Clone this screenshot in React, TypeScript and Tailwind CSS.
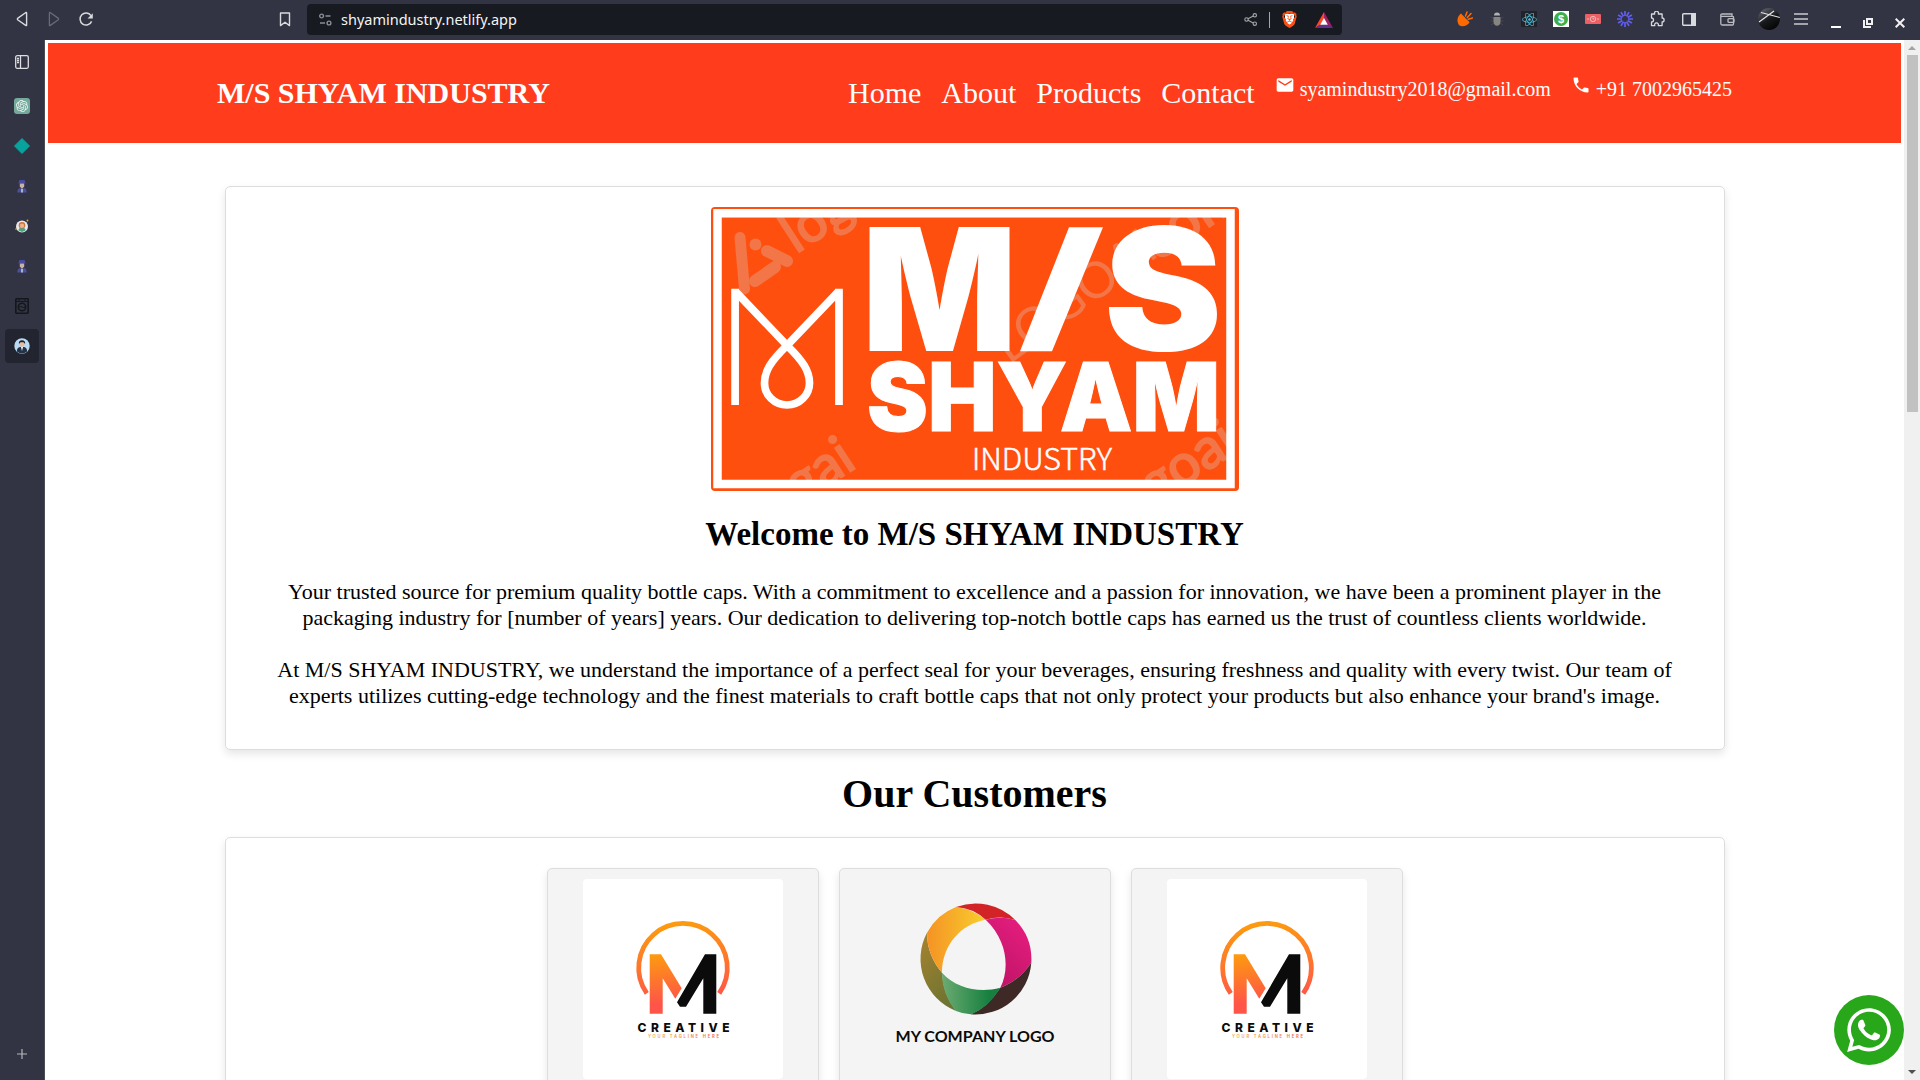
import React from "react";
import { SiBrave, SiOpenai } from "react-icons/si";
import { FaReact, FaWhatsapp } from "react-icons/fa";
import { MdEmail, MdPhone } from "react-icons/md";

type Kids = { children?: React.ReactNode };

const Cell = ({ children }: Kids) => (
  <div className="flex h-10 w-8 shrink-0 items-center justify-center pb-0.5">{children}</div>
);

function Toolbar() {
  return (
    <div className="flex h-10 shrink-0 items-center bg-[#323443] text-[#d9dadd]">
      <div className="flex w-[301px] items-center pl-[6px]">
        <Cell>
          <svg width="16" height="16" viewBox="0 0 16 16" fill="none" stroke="currentColor" strokeWidth="1.4" strokeLinejoin="round">
            <path d="M12.6 2v12.2Q12.6 15 11.7 14.4L3.6 8.7Q3 8 3.6 7.4L11.5 1.7Q12.6 1 12.6 2z" />
          </svg>
        </Cell>
        <Cell>
          <svg width="16" height="16" viewBox="0 0 16 16" fill="none" stroke="#686a77" strokeWidth="1.3" strokeLinejoin="round">
            <path d="M3.4 2v12.2Q3.4 15 4.3 14.4L12.4 8.7Q13 8 12.4 7.4L4.5 1.7Q3.4 1 3.4 2z" />
          </svg>
        </Cell>
        <Cell>
          <svg width="16" height="16" viewBox="0 0 16 16" fill="none" stroke="currentColor" strokeWidth="1.5">
            <path d="M13 4.6A6 6 0 1 0 13.6 10.4" />
            <path d="M14.8 2.2v5.2H9.6z" fill="currentColor" stroke="none" />
          </svg>
        </Cell>
        <div className="flex-1" />
        <div className="mb-0.5 flex w-8 justify-center">
          <svg width="12" height="15" viewBox="0 0 12 15" fill="none" stroke="currentColor" strokeWidth="1.4" strokeLinejoin="round">
            <path d="M1.5 1h9v12.6L6 10.2 1.5 13.6z" />
          </svg>
        </div>
      </div>
      <div className="mb-px ml-[6px] flex h-[31px] w-[1035px] items-center rounded bg-[#181a21] pl-3">
        <svg width="13" height="13" viewBox="0 0 13 13" fill="none" stroke="#8b8d94" strokeWidth="1.4">
          <circle cx="2.6" cy="3" r="1.9" />
          <path d="M6.5 3h5M1 10h5" />
          <circle cx="10" cy="10" r="1.9" />
        </svg>
        <span className="mb-0.5 ml-[9px] font-['Noto_Sans'] text-[14.5px] leading-5 text-[#f4f4f5]">shyamindustry.netlify.app</span>
        <div className="flex-1" />
        <svg className="mr-[11px]" width="14" height="13" viewBox="0 0 14 13" fill="none" stroke="#a5a6ab" strokeWidth="1.1">
          <circle cx="2.5" cy="6.5" r="1.7" />
          <circle cx="10.8" cy="2.3" r="1.7" />
          <circle cx="10.8" cy="10.7" r="1.7" />
          <path d="M4 5.7 9.2 3.1M4 7.3l5.2 2.6" />
        </svg>
        <div className="mr-[11px] h-4 w-px bg-[#a5a6ab]" />
        <div className="relative mr-[17px] flex h-[19px] w-[17px] items-center justify-center">
          <div className="absolute left-1 top-1 h-[11px] w-[9px] bg-white" />
          <SiBrave className="relative" size={19} color="#fb4f14" />
        </div>
        <svg className="mr-[9px]" width="18" height="16" viewBox="0 0 18 16">
          <path d="M9 0 0 16l9-5.500z" fill="#ff4724" />
          <path d="M9 0l9 16-9-5.500z" fill="#9e1f63" />
          <path d="M0 16h18l-5-3.500H5z" fill="#662d91" />
          <path d="M9 6l3.800 6.700H5.200z" fill="#fff" />
        </svg>
      </div>
      <div className="ml-[107px] flex items-center">
        <Cell>
          <svg width="16" height="16" viewBox="0 0 16 16">
            <path d="M3.400 3.300C-.5 6 0 12 2.200 14.200 5 16.500 10.500 15 12 11.800z" fill="#ff6a00" />
            <path d="M3.300 3.200 12 11.900" stroke="#ff6a00" strokeWidth="1.800" />
            <path d="M8.500 5 10 1M10.300 6.500l3.700-4M11.300 8.300l4.200-1.300" stroke="#ff6a00" strokeWidth="1.500" strokeLinecap="round" />
          </svg>
        </Cell>
        <Cell>
          <svg width="14" height="16" viewBox="0 0 14 16">
            <path d="M.5 6l4 2M.500 10h4M1 14l3-2M13.500 6l-4 2M13.500 10h-4M13 14l-3-2" stroke="#46474f" />
            <path d="M4 4.500Q4 1.500 7 1.500t3 3z" fill="#b1b1b1" />
            <path d="M3.500 6h7v5Q10 14.800 7 14.800T3.500 11z" fill="#85867f" />
          </svg>
        </Cell>
        <Cell>
          <div className="flex size-4 items-center justify-center bg-[#20232a]">
            <FaReact size={15} color="#53c1de" />
          </div>
        </Cell>
        <Cell>
          <div className="flex size-4 items-center justify-center bg-white">
            <div className="flex size-[14px] items-center justify-center rounded-full bg-[#3fae49] font-['Liberation_Sans'] text-[11px] font-bold leading-none text-white">$</div>
          </div>
        </Cell>
        <Cell>
          <svg width="16" height="10" viewBox="0 0 16 10">
            <rect width="16" height="10" rx="1" fill="#ea6065" />
            <g fill="none" stroke="#f6bcbd" strokeWidth=".9">
              <circle cx="8" cy="5" r="2.700" />
              <path d="M8 3.500V5h1.300M3 4v2M13 4v2" />
            </g>
          </svg>
        </Cell>
        <Cell>
          <svg width="16" height="16" viewBox="0 0 16 16" stroke="#625df5" strokeWidth="1.700">
            <path d="M8 0v5M8 11v5M0 8h5M11 8h5M4 1.100l2.500 4.300M9.500 10.600 12 14.900M1.100 4l4.300 2.500M10.600 9.500l4.300 2.500M1.100 12l4.300-2.500M10.600 6.500 14.900 4M4 14.900l2.500-4.300M9.500 5.400 12 1.100" />
          </svg>
        </Cell>
        <Cell>
          <svg width="15" height="16" viewBox="0 0 15 16" fill="none" stroke="currentColor" strokeWidth="1.300" strokeLinejoin="round">
            <path d="M1.500 3h3.200a2 2 0 1 1 3.600 0h3.800v4a2 2 0 1 1 0 4v3.600H8.200a1.900 1.900 0 1 0-3.400 0H1.500V11a2 2 0 1 0 0-4z" />
          </svg>
        </Cell>
        <Cell>
          <svg width="14" height="13" viewBox="0 0 14 13">
            <rect x=".7" y=".7" width="12.600" height="11.600" rx="1" fill="none" stroke="currentColor" strokeWidth="1.400" />
            <path d="M9 0h5v13H9z" fill="currentColor" />
          </svg>
        </Cell>
        <div className="ml-[15px] mt-px flex w-8 items-center pb-0.5">
          <svg width="15" height="13" viewBox="0 0 15 13" fill="none" stroke="#babbc1" strokeWidth="1.300">
            <path d="M12 3V1H2Q.8 1 .8 2v8.500Q.8 12 2 12h10.500Q13.500 12 13.500 11V4Q13.500 3.300 12.500 3.300H1" />
            <rect x="8" y="5.600" width="6" height="3.800" rx="1" />
          </svg>
        </div>
        <div className="ml-[6px] flex w-[22px] pb-0.5">
          <svg width="22" height="22" viewBox="0 0 22 22">
            <defs>
              <linearGradient id="ball" x1="0" y1="0" x2=".6" y2="1">
                <stop offset="0" stopColor="#70737a" />
                <stop offset=".6" stopColor="#17191c" />
                <stop offset="1" stopColor="#050607" />
              </linearGradient>
              <clipPath id="ballc"><circle cx="11" cy="11" r="11" /></clipPath>
            </defs>
            <circle cx="11" cy="11" r="11" fill="url(#ball)" />
            <g clipPath="url(#ballc)" stroke="#e3e4e6" strokeWidth="1.200">
              <path d="M3 4.500 22 9.500M1 14 16 3" />
            </g>
          </svg>
        </div>
        <div className="ml-[14px] flex w-[14px] pb-0.5">
          <svg width="14" height="12" viewBox="0 0 14 12" stroke="#c9cacf" strokeWidth="1.300">
            <path d="M0 1h14M0 6h14M0 11h14" />
          </svg>
        </div>
        <div className="ml-[23px] mt-3.5 h-0.5 w-2.5 bg-white" />
        <svg className="ml-[22px] mt-[6px]" width="10" height="10" viewBox="0 0 10 10" fill="none" stroke="#f1f1f3" strokeWidth="2">
          <path d="M4 1h5v5H4z" />
          <path d="M1 2v7h7" />
        </svg>
        <svg className="ml-[22px] mt-[6px]" width="10" height="10" viewBox="0 0 10 10" stroke="#f1f1f3" strokeWidth="2">
          <path d="M.7.700l8.600 8.600M9.300.700.700 9.300" />
        </svg>
      </div>
    </div>
  );
}

const Detective = () => (
  <svg width="12" height="13" viewBox="0 0 12 13">
    <path d="M3.300 0h5.400l.5 2.500 1.500.8H1.300l1.500-.8z" fill="#4b4c9d" />
    <path d="M3.800 3.500h4.400v3L6 9 3.800 6.500z" fill="#c3b3a9" />
    <path d="M1.300 12.500q0-4 2.700-4.500l2 1.500L8 8q2.700.5 2.700 4.500z" fill="#4a50a0" />
    <path d="M5 9h2v3.500H5z" fill="#aeb0c6" />
  </svg>
);

function Sidebar() {
  const icons = [
    <div className="flex size-4 items-center justify-center rounded-[3px] bg-[#75a99b]"><SiOpenai size={12} color="#f0f8f5" /></div>,
    <svg width="16" height="16" viewBox="0 0 16 16"><path d="M8 .5 15.500 8 8 15.500.500 8z" fill="#08a39d" stroke="#08a39d" strokeLinejoin="round" /></svg>,
    <Detective />,
    <svg width="14" height="14" viewBox="0 0 14 14">
      <circle cx="7" cy="7.500" r="6" fill="#e9e9ee" />
      <path d="M3.500 11.500q0-3 3.500-3t3.500 3L7 13.100z" fill="#4aa583" />
      <circle cx="7" cy="6.300" r="3.300" fill="#c9733f" />
      <circle cx="7" cy="6.700" r="2.200" fill="#f0b287" />
      <circle cx="12.500" cy="1.500" r=".9" fill="#e8b028" />
      <circle cx="1" cy="10" r=".8" fill="#e8b028" />
    </svg>,
    <Detective />,
    <svg width="14" height="16" viewBox="0 0 14 16" fill="none" stroke="#15171d">
      <rect x=".8" y=".8" width="12.400" height="14.400" rx=".6" strokeWidth="1.600" />
      <path d="M1 3.500h12M3 2h2M9 2h2" />
      <circle cx="7" cy="9" r="3.700" strokeWidth="1.600" />
      <path d="M4 9q1.500-1 3 0t3 0" />
    </svg>,
    <div className="flex h-[34px] w-[34px] items-center justify-center rounded bg-[#22242f]">
      <svg width="16" height="16" viewBox="0 0 16 16">
        <circle cx="8" cy="8" r="7.700" fill="#b9dcf4" />
        <path d="M2.800 13.500q.2-4.500 3.700-4.500h3q3.500 0 3.700 4.500Q8 17.500 2.800 13.500z" fill="#243347" />
        <circle cx="8" cy="6" r="2.700" fill="#e7bd9d" />
        <path d="M4.900 6Q4.500 2.300 8 2.300T11.100 6L9.500 4.300h-3z" fill="#1a2230" />
        <path d="M7 9h2l-1 4z" fill="#fff" />
      </svg>
    </div>,
  ];
  return (
    <div className="flex w-[45px] shrink-0 flex-col items-center border-r border-[#4a4c59] bg-[#323443] pr-px">
      <div className="flex h-[46px] items-center pb-0.5">
        <svg width="14" height="14" viewBox="0 0 14 14" fill="none" stroke="#dcdde0" strokeWidth="1.300">
          <rect x=".7" y=".7" width="12.600" height="12.600" rx="1.500" />
          <path d="M5.500 1v12M2 3.500h2M2 5.500h2M2 7.500h2" />
        </svg>
      </div>
      {icons.map((icon, i) => (
        <div key={i} className="flex h-10 items-center justify-center">{icon}</div>
      ))}
      <div className="flex-1" />
      <svg className="mb-[21px]" width="10" height="10" viewBox="0 0 10 10" stroke="#b4b5bb" strokeWidth="1.200"><path d="M5 0v10M0 5h10" /></svg>
    </div>
  );
}

const ShyamLogo = () => (
  <svg width="528" height="284" viewBox="0 0 528 284">
    <defs><clipPath id="frame"><rect x="6" y="6" width="514" height="271" /></clipPath></defs>
    <rect width="528" height="284" rx="4" fill="#ff4f0f" />
    <g clipPath="url(#frame)" fill="#f27648" fontFamily="Lato, sans-serif" fontWeight="400">
      <g stroke="#f27648" strokeLinecap="round" fill="none">
        <path d="M29 30.500 33.500 82" strokeWidth="11" />
        <path d="M56 44l20 10" strokeWidth="12" />
        <path d="M44 74l20-14" strokeWidth="12" />
      </g>
      <circle cx="44.500" cy="37.500" r="6" />
      <text transform="translate(85 47) rotate(-33)" fontSize="54" stroke="#f27648" strokeWidth="2">logo</text>
      <text transform="translate(298 158) rotate(-36)" fontSize="50">LOGOAI</text>
      <circle cx="435" cy="58" r="3.500" />
      <text transform="translate(446 55) rotate(-34)" fontSize="57" stroke="#f27648" strokeWidth="2">com</text>
      <text transform="translate(63 314) rotate(-33)" fontSize="55" stroke="#f27648" strokeWidth="2">ogai</text>
      <text transform="translate(444 298) rotate(-33)" fontSize="56" stroke="#f27648" strokeWidth="2">goai</text>
    </g>
    <rect x="6.500" y="6.300" width="513" height="270.700" fill="none" stroke="#fff" strokeWidth="8.500" />
    <g fill="none" stroke="#fff" strokeWidth="7.700">
      <path d="M24.100 198V81.700M128 198V81.700" />
      <path d="M24.500 84.500 76 138.500C92 154 98.500 164 98.500 176a22.500 22 0 0 1-45 0C53.500 164 60 154 76 138.500L127.500 84.500" />
    </g>
    <g fill="#fff" fontFamily="Inter, sans-serif" fontWeight="900">
      <text x="151" y="144.300" fontSize="170.500" textLength="155" lengthAdjust="spacingAndGlyphs">M</text>
      <path d="M358 20.300h34L341 144.300h-32z" />
      <text x="393" y="144.300" fontSize="170.500" textLength="118" lengthAdjust="spacingAndGlyphs">S</text>
      <text x="156" y="223.700" fontSize="95" stroke="#fff" strokeWidth="1" textLength="353" lengthAdjust="spacingAndGlyphs">SHYAM</text>
    </g>
    <text x="261" y="263.300" fill="#fff" stroke="#fff" strokeWidth=".5" fontFamily="'Noto Sans CJK SC', sans-serif" fontSize="30" fontWeight="300" textLength="140" lengthAdjust="spacingAndGlyphs">INDUSTRY</text>
  </svg>
);

const CreativeLogo = ({ id }: { id: string }) => (
  <svg className="rounded-[4px] bg-white" width="200" height="200" viewBox="0 0 200 200">
    <defs>
      <linearGradient id={id} gradientUnits="userSpaceOnUse" x1="90" y1="45" x2="98" y2="122">
        <stop offset="0" stopColor="#fd9a10" />
        <stop offset="1" stopColor="#ff5548" />
      </linearGradient>
      <linearGradient id={id + "m"} gradientUnits="userSpaceOnUse" x1="74" y1="76" x2="80" y2="124">
        <stop offset="0" stopColor="#fd9a10" />
        <stop offset="1" stopColor="#ff5548" />
      </linearGradient>
      <linearGradient id={id + "t"}>
        <stop offset="0" stopColor="#f0b040" />
        <stop offset="1" stopColor="#f06050" />
      </linearGradient>
    </defs>
    <path d="M63.800 114.300A44.300 44.300 0 1 1 136.200 114.300" fill="none" stroke={`url(#${id})`} strokeWidth="4.800" />
    <path d="M66.700 75.300H78L98.700 109.300 92.300 119.700 79.700 99.300V134.700h-13z" fill={`url(#${id}m)`} />
    <path d="M122 75.300h11.300v59.400h-13V99.300L103 127.700h-6L94 123.300z" fill="#0b0b0b" />
    <text x="54.500" y="153" fontFamily="Inter, sans-serif" fontWeight="800" fontSize="12" textLength="92" lengthAdjust="spacing" fill="#0b0b0b">CREATIVE</text>
    <text x="65" y="158.500" fontFamily="Inter, sans-serif" fontWeight="600" fontSize="4.200" textLength="71" fill={`url(#${id}t)`}>YOUR TAGLINE HERE</text>
  </svg>
);

const CompanyLogo = () => (
  <svg width="200" height="200" viewBox="0 0 200 200">
    <defs>
      <linearGradient id="yl"><stop offset="0" stopColor="#f59324" /><stop offset="1" stopColor="#f8ce2e" /></linearGradient>
      <linearGradient id="mg" x1="1" y1="0" x2=".4" y2="1"><stop offset="0" stopColor="#ea1f80" /><stop offset="1" stopColor="#c01468" /></linearGradient>
      <linearGradient id="gr"><stop offset="0" stopColor="#6cab72" /><stop offset=".8" stopColor="#178040" /></linearGradient>
      <linearGradient id="ol" x1="0" y1="0" x2=".5" y2="1"><stop offset="0" stopColor="#a8832f" /><stop offset="1" stopColor="#6f7432" /></linearGradient>
    </defs>
    <path d="M81 132A56 56 0 0 1 52 53.700Q52 76 67 93.700 68 115 81 132z" fill="url(#ol)" />
    <path d="M52 53.700A56 56 0 0 1 81 28Q98 30 110.700 40.700C86 45 67 66 67 93.700Q52 76 52 53.700z" fill="url(#yl)" />
    <path d="M81 28A56 56 0 0 1 140.300 41Q126 36 110.700 40.700 98 29 81 28z" fill="#d22327" />
    <path d="M110.700 40.700Q126 36.500 140.300 41A56 56 0 0 1 156.300 83.700Q144 102 125.300 108.700C134 92 134 63 110.700 40.700z" fill="url(#mg)" />
    <path d="M156.300 83.700A56 56 0 0 1 95.700 135.300Q112 129 125.300 108.700 144 102 156.300 83.700z" fill="#3f2927" />
    <path d="M95.700 135.300Q88 135 81 132 67 115 67 93.700C82 110 105 114 125.300 108.700Q113 129 95.700 135.300z" fill="url(#gr)" />
    <text x="20.500" y="162.700" fontFamily="Lato, sans-serif" fontWeight="700" fontSize="14.900" textLength="159" lengthAdjust="spacingAndGlyphs" fill="#0a0a0a">MY COMPANY LOGO</text>
  </svg>
);

const Customer = ({ children }: Kids) => (
  <div className="flex h-[300px] w-[272px] justify-center rounded-[5px] border border-[#ddd] bg-[#f4f4f4] pt-[10px] shadow-[0_4px_8px_rgba(0,0,0,0.1)]">{children}</div>
);

function Site() {
  return (
    <div className="flex min-w-0 flex-1 flex-col items-center overflow-hidden bg-white px-[3px] pt-[3px] font-['Liberation_Serif'] text-black">
      <header className="flex h-[100px] w-full shrink-0 items-center bg-[#ff3d1c] pl-[169px] text-white">
        <div className="w-[631px] whitespace-nowrap text-[30px] font-bold leading-[34px]">M/S SHYAM INDUSTRY</div>
        <nav className="flex gap-5 text-[30px] leading-[34px]">
          <a>Home</a><a>About</a><a>Products</a><a>Contact</a>
        </nav>
        <div className="mb-2 ml-5 flex items-center whitespace-nowrap text-[20px] leading-6">
          <MdEmail className="mb-2 mr-[5px] shrink-0" size={20} />
          <span>syamindustry2018@gmail.com</span>
          <MdPhone className="mb-2 ml-5 mr-[5px] shrink-0" size={20} />
          <span>+91 7002965425</span>
        </div>
      </header>
      <section className="mt-[43px] flex h-[564px] w-[1500px] shrink-0 flex-col items-center whitespace-nowrap rounded-[5px] border border-[#ddd] pt-5 text-center shadow-[0_4px_8px_rgba(0,0,0,0.1)]">
        <ShyamLogo />
        <h2 className="mt-6 text-[33px] font-bold leading-[38px]">Welcome to M/S SHYAM INDUSTRY</h2>
        <p className="mt-[26px] text-[22px] leading-[26px]">
          Your trusted source for premium quality bottle caps. With a commitment to excellence and a passion for innovation, we have been a prominent player in the<br />
          packaging industry for [number of years] years. Our dedication to delivering top-notch bottle caps has earned us the trust of countless clients worldwide.
        </p>
        <p className="mt-[26px] text-[22px] leading-[26px]">
          At M/S SHYAM INDUSTRY, we understand the importance of a perfect seal for your beverages, ensuring freshness and quality with every twist. Our team of<br />
          experts utilizes cutting-edge technology and the finest materials to craft bottle caps that not only protect your products but also enhance your brand's image.
        </p>
      </section>
      <h1 className="mb-5 mt-[21px] text-[40px] font-bold leading-[46px]">Our Customers</h1>
      <section className="flex h-[400px] w-[1500px] shrink-0 justify-center gap-5 rounded-[5px] border border-[#ddd] pt-[30px] shadow-[0_4px_8px_rgba(0,0,0,0.1)]">
        <Customer><CreativeLogo id="c1" /></Customer>
        <Customer><CompanyLogo /></Customer>
        <Customer><CreativeLogo id="c2" /></Customer>
      </section>
    </div>
  );
}

export default function App() {
  return (
    <div className="relative flex h-[1080px] w-[1920px] flex-col overflow-hidden">
      <Toolbar />
      <div className="flex h-[1040px]">
        <Sidebar />
        <Site />
        <div className="flex w-4 shrink-0 flex-col items-center bg-[#f0f0f0]">
          <svg className="mt-[6px]" width="8" height="4" viewBox="0 0 8 4"><path d="M0 4l4-4 4 4z" fill="#a3a3a3" /></svg>
          <div className="mt-[5px] h-[357px] w-[11px] bg-[#c1c1c1]" />
          <div className="flex-1" />
          <svg className="mb-[6px]" width="8" height="4" viewBox="0 0 8 4"><path d="M0 0l4 4 4-4z" fill="#505050" /></svg>
        </div>
      </div>
      <div className="absolute left-[1834px] top-[995px] flex size-[70px] items-center justify-center rounded-full bg-[#29a71a]">
        <FaWhatsapp size={50} color="#fff" />
      </div>
    </div>
  );
}
